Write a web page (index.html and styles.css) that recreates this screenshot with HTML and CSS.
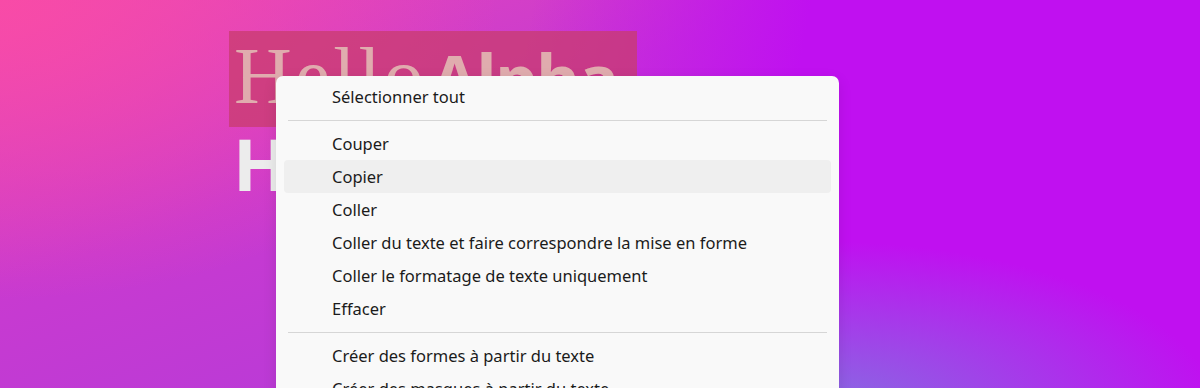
FILE: index.html
```html
<!DOCTYPE html>
<html lang="fr">
<head>
    <meta charset="UTF-8">
    <meta name="viewport" content="width=device-width, initial-scale=1.0">
    <title>Hello Alpha</title>
    <link rel="stylesheet" href="styles.css">
</head>
<body>
    <div class="stage">
        <div class="headline">
            <span class="selection"><span class="light">Hello</span> <b>Alpha</b></span>
            <span class="bold-line">Hello Alpha</span>
        </div>

        <ul class="menu">
            <li class="item">Sélectionner tout</li>
            <li class="sep"></li>
            <li class="item">Couper</li>
            <li class="item hover">Copier</li>
            <li class="item">Coller</li>
            <li class="item">Coller du texte et faire correspondre la mise en forme</li>
            <li class="item">Coller le formatage de texte uniquement</li>
            <li class="item">Effacer</li>
            <li class="sep"></li>
            <li class="item">Créer des formes à partir du texte</li>
            <li class="item">Créer des masques à partir du texte</li>
        </ul>
    </div>
</body>
</html>
```

FILE: styles.css
```css
html, body {
    margin: 0;
    height: 100%;
    overflow: hidden;
}
body {
    font-family: "Noto Sans", "Open Sans", sans-serif;
    background:
        radial-gradient(ellipse 500px 300px at 0% 0%, rgba(250, 75, 165, 0.9), rgba(250, 75, 165, 0) 100%),
        linear-gradient(160deg, #e848b8 0%, #c83ad0 35%, #a63ae0 100%),
        #c010f0;
}
.stage {
    position: relative;
    height: 100%;
    overflow: hidden;
    background:
        radial-gradient(ellipse 400px 170px at 68% 106%, rgba(130, 115, 225, 0.95), rgba(130, 115, 225, 0) 100%),
        linear-gradient(100deg, rgba(192, 16, 240, 0) 42%, rgba(192, 16, 240, 1) 64%);
}
.headline {
    display: flex;
    flex-direction: column;
    align-items: flex-start;
    padding: 31px 0 0 229px;
}
.selection {
    display: block;
    background: rgba(200, 60, 110, 0.75);
    color: #e0acae;
    height: 96px;
    width: 408px;
    line-height: 90px;
    padding-left: 5px;
    box-sizing: border-box;
    white-space: nowrap;
    font-size: 18px;
}
.light {
    font-family: "Liberation Serif", serif;
    font-size: 80px;
    font-weight: normal;
    letter-spacing: 3px;
}
.selection b {
    font-family: "Open Sans", sans-serif;
    font-size: 67px;
    font-weight: 700;
    letter-spacing: -1.5px;
}
.bold-line {
    font-family: "Open Sans", sans-serif;
    font-size: 72px;
    font-weight: 700;
    color: #ececec;
    line-height: 72px;
    padding-left: 4px;
    white-space: nowrap;
}
.menu {
    position: absolute;
    left: 276px;
    top: 76px;
    width: 563px;
    margin: 0;
    padding: 4px 0;
    list-style: none;
    background: #f9f9f9;
    border-radius: 7px;
    box-shadow: 0 4px 14px rgba(0, 0, 0, 0.1);
}
.item {
    height: 33px;
    line-height: 33px;
    margin: 0 8px;
    padding-left: 48px;
    font-size: 16.5px;
    color: #1b1b1b;
    border-radius: 4px;
    white-space: nowrap;
}
.item.hover {
    background: #efefef;
}
.sep {
    height: 1px;
    margin: 7px 12px 6px 12px;
    background: #d6d6d6;
}
```
